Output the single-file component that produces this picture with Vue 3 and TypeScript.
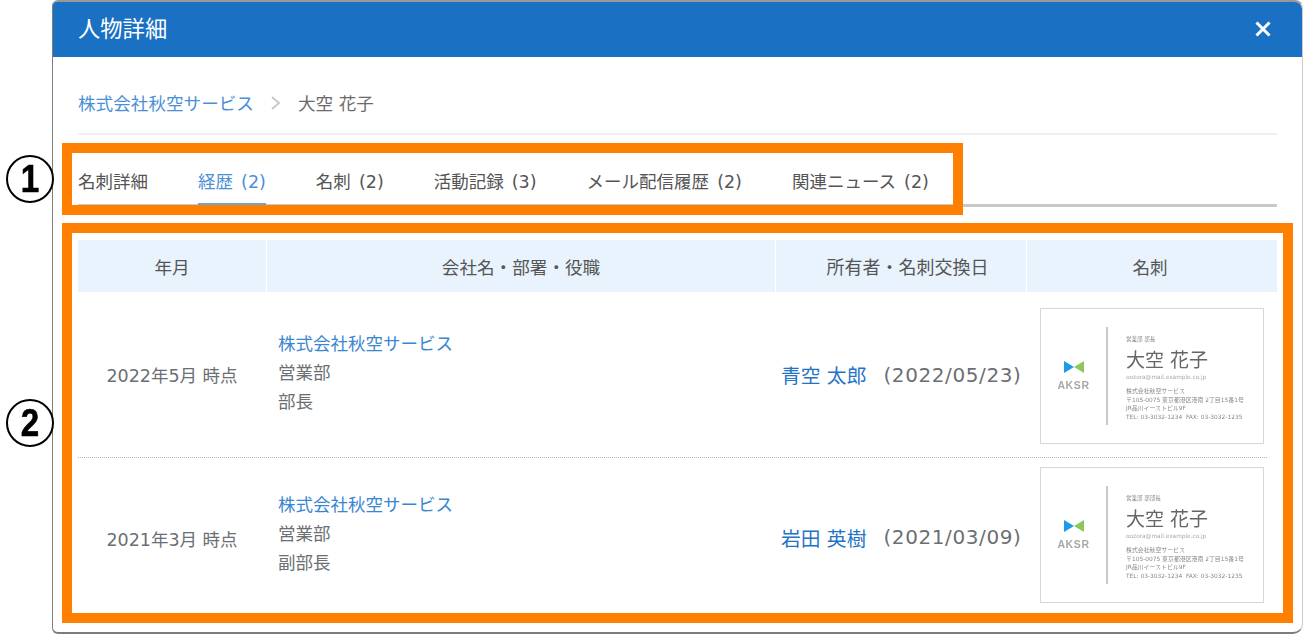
<script setup lang="ts">
interface HistoryRow {
  period: string
  company: string
  dept: string
  title: string
  owner: string
  date: string
  cardTitle: string
}

const tabs = [
  { label: '名刺詳細', active: false },
  { label: '経歴 (2)', active: true },
  { label: '名刺 (2)', active: false },
  { label: '活動記録 (3)', active: false },
  { label: 'メール配信履歴 (2)', active: false },
  { label: '関連ニュース (2)', active: false },
]

const rows: HistoryRow[] = [
  {
    period: '2022年5月 時点',
    company: '株式会社秋空サービス',
    dept: '営業部',
    title: '部長',
    owner: '青空 太郎',
    date: '(2022/05/23)',
    cardTitle: '営業部 部長',
  },
  {
    period: '2021年3月 時点',
    company: '株式会社秋空サービス',
    dept: '営業部',
    title: '副部長',
    owner: '岩田 英樹',
    date: '(2021/03/09)',
    cardTitle: '営業部 部部長',
  },
]
</script>

<template>
  <div class="page">
    <div class="dialog">
      <header class="dialog-head">
        <h1>人物詳細</h1>
        <svg class="close" width="18" height="16" viewBox="0 0 18 16">
          <path d="M2.5 1.5 L15.5 14.5 M15.5 1.5 L2.5 14.5" stroke="#fff" stroke-width="3" fill="none" />
        </svg>
      </header>

      <div class="dialog-body">
        <nav class="crumbs">
          <a>株式会社秋空サービス</a>
          <svg width="12" height="16" viewBox="0 0 12 16">
            <path d="M2 2 L9 8 L2 14" stroke="#c4c8cc" stroke-width="1.8" fill="none" />
          </svg>
          <span>大空 花子</span>
        </nav>

        <div class="tabs">
          <div v-for="t in tabs" :key="t.label" class="tab" :class="{ active: t.active }">{{ t.label }}</div>
        </div>

        <div class="table">
          <div class="th">年月</div>
          <div class="th">会社名・部署・役職</div>
          <div class="th th-owner">所有者・名刺交換日</div>
          <div class="th th-card">名刺</div>

          <template v-for="(r, i) in rows" :key="r.period">
            <div class="td period" :class="{ first: i === 0 }">{{ r.period }}</div>
            <div class="td company" :class="{ first: i === 0 }">
              <a>{{ r.company }}</a>
              <span>{{ r.dept }}</span>
              <span>{{ r.title }}</span>
            </div>
            <div class="td owner" :class="{ first: i === 0 }">
              <a>{{ r.owner }}</a>
              <span>{{ r.date }}</span>
            </div>
            <div class="td card-cell" :class="{ first: i === 0 }">
              <div class="card">
                <div class="card-logo">
                  <svg width="20" height="12" viewBox="0 0 20 12">
                    <path d="M0 0 L10 6 L0 12 Z" fill="#1e9be8" />
                    <path d="M20 0 L10 6 L20 12 Z" fill="#8cc859" />
                  </svg>
                  <b>AKSR</b>
                </div>
                <div class="card-info">
                  <p class="c-title">{{ r.cardTitle }}</p>
                  <p class="c-name">大空 花子</p>
                  <p class="c-mail">oozora@mail.example.co.jp</p>
                  <p class="c-addr">株式会社秋空サービス</p>
                  <p class="c-addr">〒105-0075 東京都港区港南 2丁目15番1号</p>
                  <p class="c-addr">JR品川イーストビル9F</p>
                  <p class="c-addr">TEL: 03-3032-1234 &nbsp;FAX: 03-3032-1235</p>
                </div>
              </div>
            </div>
            <div v-if="i === 0" class="divider"></div>
          </template>
        </div>
      </div>

      <!-- annotation overlays -->
      <div class="mark mark-tabs"></div>
      <div class="mark mark-table"></div>
    </div>

    <div class="num num-1"><span>1</span></div>
    <div class="num num-2"><span>2</span></div>
  </div>
</template>

<style>
body {
  background: #fff;
  overflow: hidden;
}
</style>

<style scoped>
.page {
  position: relative;
  width: 1303px;
  height: 635px;
  padding: 0 0 0 52px;
  box-sizing: border-box;
  font-family: "DejaVu Sans", "Noto Sans CJK JP", sans-serif;
  color: #666;
  overflow: hidden;
}

.dialog {
  position: relative;
  width: 1251px;
  height: 634px;
  box-sizing: border-box;
  border: 1px solid #7d7d7d;
  border-top: 2px solid #999;
  border-bottom: 2px solid #7d7d7d;
  border-right-color: #ccc;
  border-radius: 6px 8px 10px 6px;
  background: #fff;
}

.dialog-head {
  display: flex;
  align-items: center;
  justify-content: space-between;
  height: 55px;
  padding: 0 30px 0 25px;
  background: #1a70c3;
  border-radius: 4px 7px 0 0;
}

.dialog-head h1 {
  margin: 0 0 6px;
  font-size: 22.3px;
  font-weight: 400;
  color: #fff;
}

.close {
  display: block;
  margin-bottom: 1px;
}

.dialog-body {
  padding: 0 25px;
}

.crumbs {
  display: flex;
  align-items: center;
  height: 61px;
  padding-top: 15px;
  border-bottom: 2px solid #efefef;
  font-size: 17.6px;
}

.crumbs a {
  color: #4a90d6;
}

.crumbs svg {
  margin: 0 16px;
}

.crumbs span {
  color: #6a6a6a;
}

.tabs {
  display: flex;
  gap: 50px;
  height: 72px;
  border-bottom: 3px solid #c9c9c9;
  box-sizing: border-box;
  align-items: flex-end;
}

.tab {
  height: 47px;
  line-height: 48px;
  font-size: 17.5px;
  word-spacing: 2.5px;
  color: #555;
  white-space: nowrap;
  margin-bottom: -1px;
  box-sizing: border-box;
}

.tab.active {
  color: #4a90d6;
  border-bottom: 2px solid #6ba5de;
}

.table {
  display: grid;
  grid-template-columns: 188px 509px 251px 251px;
  margin-top: 33px;
}

.th {
  display: flex;
  align-items: center;
  justify-content: center;
  height: 52px;
  background: #e8f3fd;
  border-left: 1px solid #fff;
  font-size: 17.6px;
  color: #555;
  box-sizing: border-box;
}

.th:first-child {
  border-left: 0;
}

.th-owner {
  padding-left: 13px;
  font-size: 18px;
}

.th-card {
  padding-right: 4px;
}

.td {
  display: flex;
  height: 162px;
  box-sizing: border-box;
  font-size: 17.5px;
  color: #6b6f73;
}

.td.first {
  height: 165px;
}

.divider {
  grid-column: 1 / -1;
  height: 0;
  margin-right: 10px;
  border-bottom: 1px dotted #b5b5b5;
}

.period {
  align-items: center;
  justify-content: center;
  padding-bottom: 1px;
}

.period.first {
  padding-bottom: 0;
}

.company {
  flex-direction: column;
  justify-content: center;
  gap: 5px;
  padding-left: 12px;
  padding-bottom: 11px;
  line-height: 24px;
}

.company.first {
  padding-bottom: 3px;
}

.company a {
  color: #3a86cf;
}

.owner {
  align-items: center;
  padding-left: 6px;
  padding-bottom: 4px;
  font-size: 19.8px;
  white-space: nowrap;
}

.owner.first {
  padding-bottom: 0;
}

.owner a {
  color: #1f74c6;
  margin-right: 17px;
}

.owner span {
  font-size: 20px;
  letter-spacing: 0.6px;
}

.card-cell {
  align-items: flex-start;
  padding: 9px 0 0 14px;
}

.td.first.card-cell {
  padding-top: 16px;
}

.card {
  display: flex;
  align-items: center;
  width: 224px;
  height: 136px;
  box-sizing: border-box;
  border: 1px solid #d4d6d9;
  background: #fff;
  filter: blur(0.35px);
}

.card-logo {
  display: flex;
  flex-direction: column;
  align-items: center;
  gap: 6px;
  width: 65px;
}

.card-logo b {
  font-family: "Liberation Sans", sans-serif;
  font-size: 10.5px;
  font-weight: 700;
  letter-spacing: 0.6px;
  line-height: 12px;
  color: #a8a8a8;
}

.card-info {
  height: 98px;
  padding-left: 18px;
  border-left: 2px solid #c8c8c8;
  box-sizing: border-box;
  white-space: nowrap;
}

.card-info p {
  margin: 0;
}

.c-title {
  font-size: 5.5px;
  line-height: 8px;
  color: #888;
  margin-top: 8px !important;
}

.c-name {
  font-size: 19px;
  line-height: 25px;
  margin-top: 5px !important;
  color: #666;
}

.c-mail {
  font-size: 5.8px;
  line-height: 8px;
  color: #aaa;
  margin: 0 0 6px !important;
}

.c-addr {
  font-size: 5.9px;
  line-height: 8.7px;
  color: #888;
}

.mark {
  position: absolute;
  border: 10px solid #ff8000;
  box-sizing: border-box;
  pointer-events: none;
}

.mark-tabs {
  left: 9px;
  top: 141px;
  width: 901px;
  height: 72px;
}

.mark-table {
  left: 9px;
  top: 221px;
  width: 1231px;
  height: 400px;
}

.num {
  position: absolute;
  left: 6px;
  width: 48px;
  height: 48px;
  box-sizing: border-box;
  border: 2px solid #000;
  border-radius: 50%;
  background: #fff;
  color: #000;
  font-family: "Liberation Sans", sans-serif;
  font-size: 39px;
  font-weight: 700;
  line-height: 44px;
  text-align: center;
}

.num span {
  display: inline-block;
  transform: scaleX(0.85);
  -webkit-text-stroke: 0.6px #000;
}

.num-1 {
  top: 155px;
}

.num-2 {
  top: 399px;
}
</style>
